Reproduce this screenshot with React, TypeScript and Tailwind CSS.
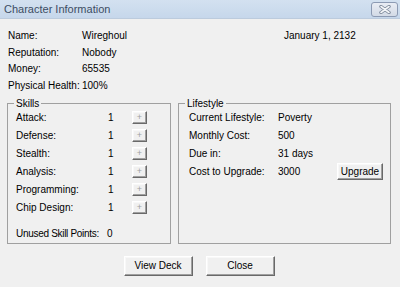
import React from 'react';

const font = "font-['Liberation_Sans',Arial,sans-serif]";

const winBtn =
  'bg-[#f0f0f0] border border-t-white border-l-white border-r-[#696969] border-b-[#696969] shadow-[inset_-1px_-1px_0_#a0a0a0,inset_1px_1px_0_#f8f8f8] leading-none flex items-center justify-center';

const info = [
  ['Name:', 'Wireghoul'],
  ['Reputation:', 'Nobody'],
  ['Money:', '65535'],
  ['Physical Health:', '100%'],
];

const skills = [
  ['Attack:', '1'],
  ['Defense:', '1'],
  ['Stealth:', '1'],
  ['Analysis:', '1'],
  ['Programming:', '1'],
  ['Chip Design:', '1'],
];

const lifestyle = [
  ['Current Lifestyle:', 'Poverty'],
  ['Monthly Cost:', '500'],
  ['Due in:', '31 days'],
];

const CloseGlyph: React.FC = () => (
  <svg width="12" height="9" viewBox="0 0 12 9">
    <path d="M2 1.5 L10 7.5 M10 1.5 L2 7.5" stroke="#7b8799" strokeWidth="3.4" strokeLinecap="round" />
    <path d="M2 1.5 L10 7.5 M10 1.5 L2 7.5" stroke="#f4f6f9" strokeWidth="1.6" strokeLinecap="round" />
  </svg>
);

const App: React.FC = () => {
  return (
    <div className={`w-[400px] h-[287px] bg-[#f0f0f0] flex flex-col overflow-hidden text-black text-[10px] ${font}`}>
      {/* Title bar */}
      <div className="h-[19px] shrink-0 flex items-center justify-between pl-[4px] pr-[2px] bg-gradient-to-b from-[#d3e1f0] to-[#c6d7eb] border-b border-[#bccbdd]">
        <span className="text-[11px] text-[#3d4d63] leading-none">Character Information</span>
        <div className="w-[27px] h-[15px] rounded-[3px] border border-[#8c9ab3] bg-gradient-to-b from-[#e9edf4] to-[#d3dae6] flex items-center justify-center">
          <CloseGlyph />
        </div>
      </div>

      {/* Character info */}
      <div className="flex pt-[8px] pl-[8px]">
        <div className="w-[276px]">
          {info.map(([label, value]) => (
            <div key={label} className="flex items-center h-[16.7px]">
              <span className="w-[74px] shrink-0 min-w-0 whitespace-nowrap">{label}</span>
              <span>{value}</span>
            </div>
          ))}
        </div>
        <div className="h-[16.7px] flex items-center">January 1, 2132</div>
      </div>

      {/* Group boxes */}
      <div className="flex gap-[7px] pl-[7px] mt-[4px]">
        <fieldset className="w-[164px] h-[146px] border border-[#a0a0a0] rounded-none">
          <legend className="ml-[6px] px-[2px] leading-[12px]">Skills</legend>
          <div className="pl-[8px] -mt-[1px]">
            {skills.map(([label, value]) => (
              <div key={label} className="flex items-center h-[18px]">
                <span className="w-[92px]">{label}</span>
                <span className="w-[24px]">{value}</span>
                <div className={`${winBtn} w-[15px] h-[13px] text-[#a0a0a0] text-[9px]`}>+</div>
              </div>
            ))}
            <div className="flex items-center h-[16px] mt-[9px]">
              <span className="w-[91px] shrink-0 min-w-0 whitespace-nowrap tracking-[-0.3px]">Unused Skill Points:</span>
              <span>0</span>
            </div>
          </div>
        </fieldset>

        <fieldset className="w-[213px] h-[146px] border border-[#a0a0a0] rounded-none">
          <legend className="ml-[6px] px-[2px] leading-[12px]">Lifestyle</legend>
          <div className="pl-[10px] pr-[7px] -mt-[1px]">
            {lifestyle.map(([label, value]) => (
              <div key={label} className="flex items-center h-[18px]">
                <span className="w-[89px]">{label}</span>
                <span>{value}</span>
              </div>
            ))}
            <div className="flex items-center h-[18px]">
              <span className="w-[89px]">Cost to Upgrade:</span>
              <span className="flex-1">3000</span>
              <div className={`${winBtn} w-[46px] h-[17px] text-black`}>Upgrade</div>
            </div>
          </div>
        </fieldset>
      </div>

      {/* Bottom buttons */}
      <div className="flex justify-center gap-[13px] mt-[12px] pr-[2px]">
        <div className={`${winBtn} w-[69px] h-[20px] text-black`}>View Deck</div>
        <div className={`${winBtn} w-[69px] h-[20px] text-black`}>Close</div>
      </div>
    </div>
  );
};

export default App;
